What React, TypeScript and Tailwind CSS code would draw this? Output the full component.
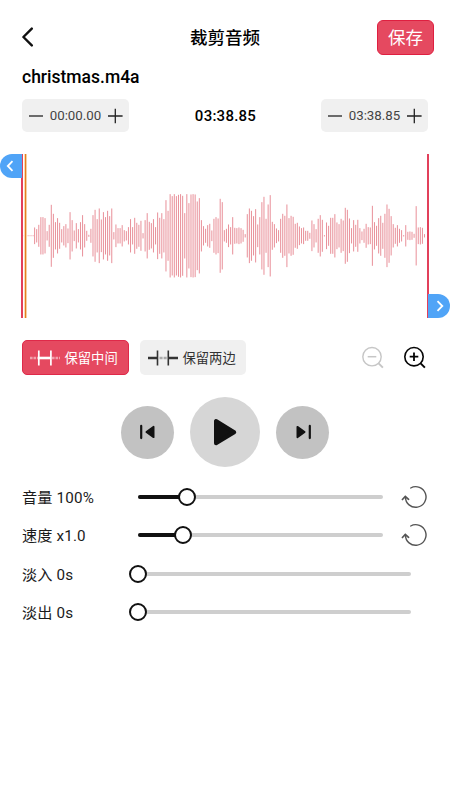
import React from 'react';

// Half heights of the bars, in thirds of a pixel
const LEVELS = [
  25, 20, 33, 56, 56, 53, 14, 33, 93, 66, 41, 53, 39, 20, 29, 35, 22, 71, 47, 16, 38, 20, 41, 62, 35, 15, 3, 21, 62, 78,
  50, 82, 49, 71, 56, 75, 59, 82, 11, 34, 23, 23, 32, 17, 14, 26, 50, 26, 54, 39, 33, 45, 8, 47, 68, 42, 38, 50, 26, 70,
  54, 68, 50, 107, 75, 125, 119, 125, 119, 123, 125, 120, 68, 125, 98, 124, 125, 124, 103, 113, 47, 29, 21, 32, 36, 16,
  51, 56, 52, 111, 101, 17, 21, 34, 26, 56, 24, 23, 25, 23, 18, 5, 65, 82, 75, 59, 80, 34, 56, 101, 117, 51, 94, 122, 42,
  35, 22, 17, 51, 66, 60, 94, 53, 60, 57, 36, 39, 28, 23, 25, 15, 15, 9, 46, 35, 20, 51, 62, 48, 2, 40, 30, 54, 54, 65,
  40, 35, 51, 46, 84, 78, 52, 23, 47, 33, 48, 23, 13, 21, 36, 26, 25, 90, 41, 30, 53, 60, 39, 66, 94, 81, 59, 35, 24, 32,
  21, 17, 2, 32, 12, 13, 12, 6, 89, 25, 26, 24, 5,
];
const PITCH = (424.5 - 34.6) / (LEVELS.length - 1);

function Waveform() {
  return (
    <svg className="block h-[164px] w-[450px]" viewBox="0 154 450 164">
      {[0, 1, 2, 3, 4, 5].map((i) => (
        <rect key={i} x={22.2 + i * 2.08} y={235} width="1" height="1.3" fill="#efb0b6" />
      ))}
      {LEVELS.map((v, i) => (
        <rect key={i} x={34.1 + i * PITCH} y={235.8 - v / 3} width="1.02" height={(v * 2) / 3} fill="#e9929b" />
      ))}
      <rect x="21" y="154" width="2" height="164" fill="#e2405b" />
      <rect x="24" y="154" width="3" height="164" fill="#fbe3c5" />
      <rect x="24.9" y="154" width="1.3" height="164" fill="#e5801f" />
      <rect x="427" y="154" width="2" height="164" fill="#e2405b" />
      <path d="M22 154H12a12 12 0 0 0 0 24h10z" fill="#50a4f7" />
      <path d="M12.5 161.2 7.8 166l4.7 4.8" fill="none" stroke="#fff" strokeWidth="1.8" />
      <path d="M428 294h10a12 12 0 0 1 0 24h-10z" fill="#50a4f7" />
      <path d="m437.5 301.2 4.8 4.8-4.8 4.8" fill="none" stroke="#fff" strokeWidth="1.8" />
    </svg>
  );
}

function TimeBox({ value }: { value: string }) {
  return (
    <div className="flex h-[33px] w-[107px] items-center justify-between rounded-[5px] bg-[#f0f0f0] pl-[7px] pr-[6px]">
      <svg width="14" height="16" viewBox="0 0 14 16"><path d="M0 8h14" stroke="#222" strokeWidth="1.3" /></svg>
      <span className="text-[13.3px] leading-none text-[#444]">{value}</span>
      <svg width="15" height="16" viewBox="0 0 15 16"><path d="M0 8h14.6M7.3 .8v14.4" stroke="#222" strokeWidth="1.3" /></svg>
    </div>
  );
}

function Slider({ label, value, reset }: { label: string; value: number; reset?: boolean }) {
  return (
    <div className="flex h-[38.3px] items-center pl-[22px]">
      <span className="w-[116px] pt-[3px] text-[15.2px] leading-none tracking-[0.15px] text-[#1a1a1a]">{label}</span>
      <div className={`relative h-[4px] rounded-full bg-[#cecece] ${reset ? 'w-[245px]' : 'w-[272.5px]'}`}>
        <div className="h-full rounded-full bg-[#111]" style={{ width: value }} />
        <div className="absolute top-[-7px] h-[18px] w-[18px] rounded-full border-2 border-[#111] bg-white" style={{ left: value - 9 }} />
      </div>
      {reset && (
        <svg className="ml-[18px]" width="28" height="26" viewBox="0 0 28 26" fill="none" stroke="#555" strokeWidth="1.4" strokeLinecap="round">
          <path d="M9.7 4A10.3 10.3 0 1 1 4.4 13" />
          <path d="m1.4 15.5 2.9-3 3.3 2.8" strokeWidth="1.7" />
        </svg>
      )}
    </div>
  );
}

function ZoomIcon({ plus }: { plus?: boolean }) {
  return (
    <svg width="24" height="24" viewBox="0 0 24 24" fill="none" stroke={plus ? '#050505' : '#c6c6c6'} strokeWidth={plus ? 1.6 : 1.4}>
      <circle cx="11" cy="10.7" r="9.2" />
      <path d="m17.6 17.3 4.3 4.4" strokeWidth="1.9" />
      <path d={plus ? 'M6.7 10.7h8.6M11 6.4V15' : 'M6.7 10.7h8.6'} strokeWidth={plus ? 1.8 : 1.5} />
    </svg>
  );
}

function SkipIcon({ next }: { next?: boolean }) {
  return (
    <svg width="16" height="16" viewBox="0 0 16 16" fill="#111" stroke="#111" strokeLinejoin="round" strokeLinecap="round" className={next ? 'rotate-180' : ''}>
      <path d="M1.2 1.9v12.2" strokeWidth="2.2" />
      <path d="M13.6 2.8v10.4L6.4 8z" strokeWidth="1.8" />
    </svg>
  );
}

export default function App() {
  return (
    <main className="flex h-[800px] w-[450px] flex-col overflow-hidden bg-white font-['Roboto','Noto_Sans_CJK_SC',sans-serif] text-black">
      <header className="flex h-[66px] items-center justify-between pl-[22px] pr-[16px] pt-[8px]">
        <svg width="56" height="20" viewBox="0 0 56 20" fill="none" stroke="#111" strokeWidth="2.4" strokeLinecap="round" strokeLinejoin="round">
          <path d="M9.8 1.6 1.4 10l8.4 8.4" />
        </svg>
        <h1 className="mr-[5px] pt-[3px] text-[17.5px] font-medium leading-none">裁剪音频</h1>
        <button className="flex h-[35px] w-[57px] items-center justify-center rounded-[6px] border border-[#df1f40] bg-[#e54960] pt-[3px] text-[17.5px] leading-none text-white">保存</button>
      </header>

      <div className="flex h-[33px] items-start pl-[22px]">
        <h2 className="text-[17.5px] font-medium leading-[23px]">christmas.m4a</h2>
      </div>
      <div className="flex h-[55px] items-start justify-between pl-[22px] pr-[22px]">
        <TimeBox value="00:00.00" />
        <strong className="ml-px text-[15px] font-medium leading-[35px] tracking-[0.25px]">03:38.85</strong>
        <TimeBox value="03:38.85" />
      </div>

      <Waveform />

      <div className="flex h-[79px] items-start pl-[22px] pt-[22px]">
        <button className="flex h-[35px] w-[106.5px] items-center gap-[4.5px] rounded-[5px] border border-[#df2949] bg-[#e54960] pl-[7px] text-[13.3px] leading-none text-white">
          <svg width="30" height="18" viewBox="0 0 30 18" fill="none" stroke="#fff">
            <path d="M0 9h8M22 9h8" stroke="#f1a2ad" strokeWidth="2.4" strokeDasharray="2.6 .9" />
            <path d="M8.8 1.5v15M20.9 1.5v15" strokeWidth="1.7" />
            <path d="M9 9h12" strokeWidth="2.6" />
          </svg>
          <span className="pt-[3px]">保留中间</span>
        </button>
        <button className="ml-[11px] flex h-[35px] w-[106.5px] items-center gap-[5px] rounded-[5px] bg-[#f0f0f0] pl-[8px] text-[13.3px] leading-none text-[#333]">
          <svg width="30" height="18" viewBox="0 0 30 18" fill="none" stroke="#333">
            <path d="M0 9h9.5M20 9h10" strokeWidth="2.4" />
            <path d="M9.5 1.5v15M20.3 1.5v15" strokeWidth="1.6" />
            <path d="M11.5 9h7.5" stroke="#aaa" strokeWidth="2.4" strokeDasharray="3.1 1" />
          </svg>
          <span className="pt-[3px]">保留两边</span>
        </button>
        <div className="ml-[115px] flex gap-[18px] pt-[6px]">
          <ZoomIcon />
          <ZoomIcon plus />
        </div>
      </div>

      <div className="flex h-[70px] items-center justify-center gap-[16px]">
        <button className="flex h-[53px] w-[53px] items-center justify-center rounded-full bg-[#c2c2c2]"><SkipIcon /></button>
        <button className="flex h-[70px] w-[70px] items-center justify-center rounded-full bg-[#d6d6d6]">
          <svg width="28" height="30" viewBox="0 0 28 30" fill="#111" stroke="#111" strokeWidth="4" strokeLinejoin="round">
            <path d="M5 4v22.2L23.2 15.2z" />
          </svg>
        </button>
        <button className="flex h-[53px] w-[53px] items-center justify-center rounded-full bg-[#c2c2c2]"><SkipIcon next /></button>
      </div>

      <section className="pt-[11px]">
        <Slider label="音量 100%" value={49} reset />
        <Slider label="速度 x1.0" value={45} reset />
        <Slider label="淡入 0s" value={0} />
        <Slider label="淡出 0s" value={0} />
      </section>
    </main>
  );
}
